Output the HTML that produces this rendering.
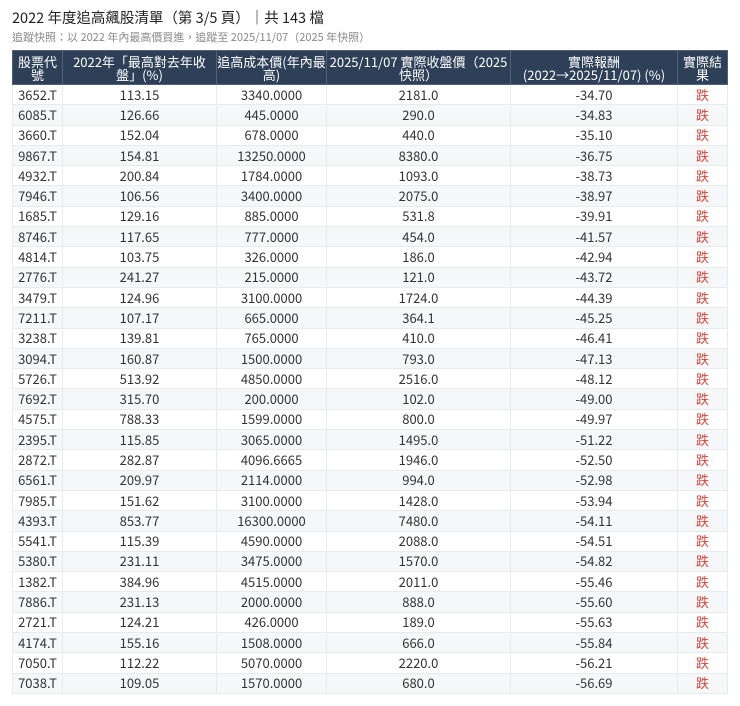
<!DOCTYPE html>
<html><head><meta charset="utf-8"><style>
html,body{margin:0;padding:0;background:#fff;width:740px;height:706px;overflow:hidden}
body{font-family:"Noto Sans CJK TC","Liberation Sans",sans-serif;color:#222}
h1{position:absolute;left:12px;top:8px;margin:0;font-size:14.5px;font-weight:normal;color:#222;line-height:20px}
.sub{position:absolute;left:12px;top:30px;font-size:11px;color:#888;line-height:14px}
table{position:absolute;left:12px;top:50px;border-collapse:collapse;width:715px;table-layout:fixed;font-size:13px}
th{background:#2e4057;color:#fff;font-weight:normal;height:33px;line-height:13px;padding:0 9px;border:1px solid #506178;font-size:13px;white-space:nowrap}
td{height:19.3px;padding:0;text-align:center;border:1px solid #e8ebee;line-height:18px;color:#333}
tr:nth-child(even) td{background:#f6f7f8}
td.r{color:#d9453a}
</style></head><body>
<h1>2022 年度追高飆股清單（第 3/5 頁）｜共 143 檔</h1>
<div class="sub">追蹤快照：以 2022 年內最高價買進，追蹤至 2025/11/07（2025 年快照）</div>
<table>
<colgroup><col style="width:50px"><col style="width:154px"><col style="width:110px"><col style="width:184px"><col style="width:167px"><col style="width:50px"></colgroup>
<thead><tr><th style="padding:0">股票代<br>號</th><th style="padding:0">2022年「最高對去年收<br>盤」(%)</th><th style="padding:0">追高成本價(年內最<br>高)</th><th style="padding:0">2025/11/07 實際收盤價（2025<br>快照）</th><th style="padding:0">實際報酬<br>(2022→2025/11/07) (%)</th><th style="padding:0">實際結<br>果</th></tr></thead>
<tbody>
<tr><td>3652.T</td><td>113.15</td><td>3340.0000</td><td>2181.0</td><td>-34.70</td><td class="r">跌</td></tr>
<tr><td>6085.T</td><td>126.66</td><td>445.0000</td><td>290.0</td><td>-34.83</td><td class="r">跌</td></tr>
<tr><td>3660.T</td><td>152.04</td><td>678.0000</td><td>440.0</td><td>-35.10</td><td class="r">跌</td></tr>
<tr><td>9867.T</td><td>154.81</td><td>13250.0000</td><td>8380.0</td><td>-36.75</td><td class="r">跌</td></tr>
<tr><td>4932.T</td><td>200.84</td><td>1784.0000</td><td>1093.0</td><td>-38.73</td><td class="r">跌</td></tr>
<tr><td>7946.T</td><td>106.56</td><td>3400.0000</td><td>2075.0</td><td>-38.97</td><td class="r">跌</td></tr>
<tr><td>1685.T</td><td>129.16</td><td>885.0000</td><td>531.8</td><td>-39.91</td><td class="r">跌</td></tr>
<tr><td>8746.T</td><td>117.65</td><td>777.0000</td><td>454.0</td><td>-41.57</td><td class="r">跌</td></tr>
<tr><td>4814.T</td><td>103.75</td><td>326.0000</td><td>186.0</td><td>-42.94</td><td class="r">跌</td></tr>
<tr><td>2776.T</td><td>241.27</td><td>215.0000</td><td>121.0</td><td>-43.72</td><td class="r">跌</td></tr>
<tr><td>3479.T</td><td>124.96</td><td>3100.0000</td><td>1724.0</td><td>-44.39</td><td class="r">跌</td></tr>
<tr><td>7211.T</td><td>107.17</td><td>665.0000</td><td>364.1</td><td>-45.25</td><td class="r">跌</td></tr>
<tr><td>3238.T</td><td>139.81</td><td>765.0000</td><td>410.0</td><td>-46.41</td><td class="r">跌</td></tr>
<tr><td>3094.T</td><td>160.87</td><td>1500.0000</td><td>793.0</td><td>-47.13</td><td class="r">跌</td></tr>
<tr><td>5726.T</td><td>513.92</td><td>4850.0000</td><td>2516.0</td><td>-48.12</td><td class="r">跌</td></tr>
<tr><td>7692.T</td><td>315.70</td><td>200.0000</td><td>102.0</td><td>-49.00</td><td class="r">跌</td></tr>
<tr><td>4575.T</td><td>788.33</td><td>1599.0000</td><td>800.0</td><td>-49.97</td><td class="r">跌</td></tr>
<tr><td>2395.T</td><td>115.85</td><td>3065.0000</td><td>1495.0</td><td>-51.22</td><td class="r">跌</td></tr>
<tr><td>2872.T</td><td>282.87</td><td>4096.6665</td><td>1946.0</td><td>-52.50</td><td class="r">跌</td></tr>
<tr><td>6561.T</td><td>209.97</td><td>2114.0000</td><td>994.0</td><td>-52.98</td><td class="r">跌</td></tr>
<tr><td>7985.T</td><td>151.62</td><td>3100.0000</td><td>1428.0</td><td>-53.94</td><td class="r">跌</td></tr>
<tr><td>4393.T</td><td>853.77</td><td>16300.0000</td><td>7480.0</td><td>-54.11</td><td class="r">跌</td></tr>
<tr><td>5541.T</td><td>115.39</td><td>4590.0000</td><td>2088.0</td><td>-54.51</td><td class="r">跌</td></tr>
<tr><td>5380.T</td><td>231.11</td><td>3475.0000</td><td>1570.0</td><td>-54.82</td><td class="r">跌</td></tr>
<tr><td>1382.T</td><td>384.96</td><td>4515.0000</td><td>2011.0</td><td>-55.46</td><td class="r">跌</td></tr>
<tr><td>7886.T</td><td>231.13</td><td>2000.0000</td><td>888.0</td><td>-55.60</td><td class="r">跌</td></tr>
<tr><td>2721.T</td><td>124.21</td><td>426.0000</td><td>189.0</td><td>-55.63</td><td class="r">跌</td></tr>
<tr><td>4174.T</td><td>155.16</td><td>1508.0000</td><td>666.0</td><td>-55.84</td><td class="r">跌</td></tr>
<tr><td>7050.T</td><td>112.22</td><td>5070.0000</td><td>2220.0</td><td>-56.21</td><td class="r">跌</td></tr>
<tr><td>7038.T</td><td>109.05</td><td>1570.0000</td><td>680.0</td><td>-56.69</td><td class="r">跌</td></tr>
</tbody></table>
</body></html>
